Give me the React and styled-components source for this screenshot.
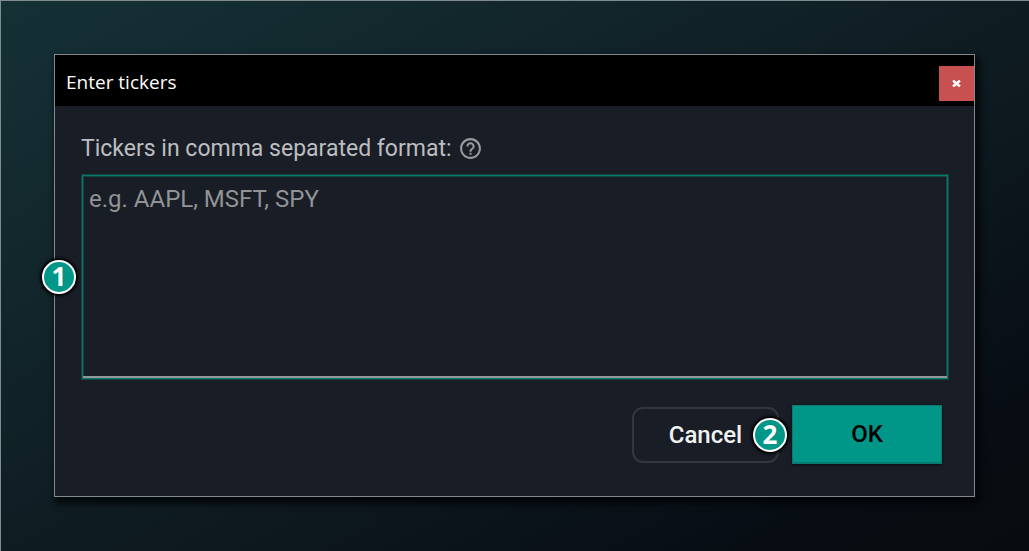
import React, { useState } from "react";
import styled, { createGlobalStyle } from "styled-components";

const color = {
  primary: "#009688",
  panel: "#191d26",
  frame: "#85898c",
  close: "#c75050",
};

function App() {
  const [open, setOpen] = useState(true);
  const [tickers, setTickers] = useState("");

  const handleClose = () => setOpen(false);
  const handleSubmit = (e) => {
    e.preventDefault();
    setOpen(false);
  };

  return (
    <Page>
      <GlobalStyle />
      {open && (
        <Dialog role="dialog" aria-labelledby="dialogTitle">
          <TitleBar>
            <Title id="dialogTitle">Enter tickers</Title>
            <CloseButton type="button" aria-label="Close" onClick={handleClose}>
              <svg width="9" height="7" viewBox="0 0 9 7">
                <path d="M1 0.5L8 6.5M8 0.5L1 6.5" stroke="#fff" strokeWidth="2.4" />
              </svg>
            </CloseButton>
          </TitleBar>
          <Form onSubmit={handleSubmit}>
            <LabelRow>
              <label htmlFor="tickers">Tickers in comma separated format:</label>
              <HelpButton type="button" aria-label="Help">
                <svg viewBox="0 0 24 24" fill="currentColor">
                  <path d="M11 18h2v-2h-2v2zm1-16C6.48 2 2 6.48 2 12s4.48 10 10 10 10-4.48 10-10S17.52 2 12 2zm0 18c-4.41 0-8-3.59-8-8s3.59-8 8-8 8 3.59 8 8-3.59 8-8 8zm0-14c-2.21 0-4 1.79-4 4h2c0-1.1.9-2 2-2s2 .9 2 2c0 2-3 1.75-3 5h2c0-2.25 3-2.5 3-5 0-2.21-1.79-4-4-4z" />
                </svg>
              </HelpButton>
            </LabelRow>
            <Field>
              <TickersInput
                id="tickers"
                name="tickers"
                placeholder="e.g. AAPL, MSFT, SPY"
                value={tickers}
                onChange={(e) => setTickers(e.target.value)}
              />
              <Badge>1</Badge>
            </Field>
            <Actions>
              <CancelButton type="button" onClick={handleClose}>
                Cancel
              </CancelButton>
              <OkWrapper>
                <OkButton type="submit">OK</OkButton>
                <Badge>2</Badge>
              </OkWrapper>
            </Actions>
          </Form>
        </Dialog>
      )}
    </Page>
  );
}

export default App;

const GlobalStyle = createGlobalStyle`
  * {
    box-sizing: border-box;
  }
  body {
    margin: 0;
    background: #0a0e14;
    font-family: Roboto, "Liberation Sans", sans-serif;
  }
`;

const Page = styled.main`
  min-height: 100vh;
  padding: 53px 54px 53px 53px;
  border-top: 1px solid #7f8c8e;
  border-left: 1px solid #7f8c8e;
  background: linear-gradient(
    to bottom right,
    #153136 0%,
    #0f1d23 50%,
    #080d14 86%,
    #090c0e 100%
  );
`;

const Dialog = styled.section`
  border: 1px solid ${color.frame};
  background: ${color.panel};
  box-shadow: 3px 5px 6px 2px rgba(3, 5, 6, 0.8);
`;

const TitleBar = styled.header`
  display: flex;
  align-items: flex-start;
  justify-content: space-between;
  padding: 11px 0 5px 11px;
  background: #000;
`;

const Title = styled.h1`
  margin: 0;
  color: #fff;
  font: 400 19px/32px "Open Sans", "Noto Sans", sans-serif;
`;

const CloseButton = styled.button`
  display: flex;
  align-items: center;
  justify-content: center;
  width: 35px;
  height: 35px;
  padding: 0;
  border: 0;
  background: ${color.close};
`;

const Form = styled.form`
  padding: 28px 25px 32px 26px;
`;

const LabelRow = styled.div`
  display: flex;
  align-items: center;
  gap: 6px;
  height: 28px;
  margin-bottom: 12px;
  color: #bcbec0;
  font-size: 23px;
`;

const HelpButton = styled.button`
  display: flex;
  padding: 0;
  border: 0;
  background: none;
  color: #999b9e;
  svg {
    width: 25px;
    height: 25px;
  }
`;

const Field = styled.div`
  position: relative;
`;

const TickersInput = styled.textarea`
  display: block;
  width: 100%;
  height: 206px;
  padding: 9px 7px;
  border: 1px solid #124442;
  border-radius: 0;
  outline: none;
  resize: none;
  background: ${color.panel};
  box-shadow: inset 0 0 0 1px #08776d, inset 0 -3px 0 #929798,
    inset 0 0 0 2px #124442;
  color: #bcbec0;
  font-family: inherit;
  font-size: 24px;
  line-height: 30px;
  &::placeholder {
    color: #919395;
    opacity: 1;
  }
`;

const Badge = styled.span`
  position: absolute;
  top: 50%;
  left: -39px;
  display: flex;
  align-items: center;
  justify-content: center;
  width: 34px;
  height: 34px;
  border: 2px solid #fff;
  border-radius: 50%;
  background: ${color.primary};
  box-shadow: 0 0 3px 2px #000;
  color: #fff;
  font: 700 26px/28px "Open Sans", "Noto Sans", sans-serif;
  padding-bottom: 2px;
  transform: translateY(-50%);
`;

const Actions = styled.div`
  display: flex;
  align-items: center;
  justify-content: flex-end;
  gap: 13px;
  margin-top: 25px;
  padding-right: 7px;
`;

const OkWrapper = styled.div`
  position: relative;
`;

const Button = styled.button`
  font-family: inherit;
  font-size: 24px;
  font-weight: 500;
`;

const CancelButton = styled(Button)`
  width: 147px;
  height: 56px;
  border: 2px solid #33363f;
  border-radius: 11px;
  background: transparent;
  color: #f0f1f1;
`;

const OkButton = styled(Button)`
  display: block;
  width: 150px;
  height: 59px;
  border: 1px solid #087a70;
  border-bottom-width: 2px;
  background: ${color.primary};
  box-shadow: 0 1px 3px rgba(0, 0, 0, 0.6);
  color: #000;
`;
